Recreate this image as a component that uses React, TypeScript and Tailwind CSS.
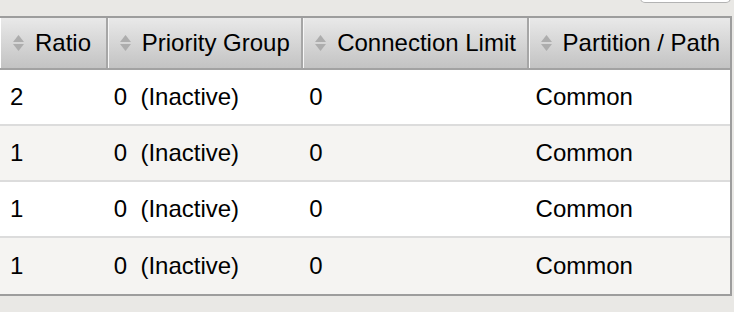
import React from "react";

const cols = [
  { label: "Ratio", w: "w-[106px]" },
  { label: "Priority Group", w: "w-[196px]" },
  { label: "Connection Limit", w: "w-[226px]" },
  { label: "Partition / Path", w: "w-[204px]" },
];

const rows = [
  { ratio: "2", group: "0  (Inactive)", limit: "0", path: "Common" },
  { ratio: "1", group: "0  (Inactive)", limit: "0", path: "Common" },
  { ratio: "1", group: "0  (Inactive)", limit: "0", path: "Common" },
  { ratio: "1", group: "0  (Inactive)", limit: "0", path: "Common" },
];

function SortIcon() {
  return (
    <svg width="11" height="16" viewBox="0 0 11 16" className="shrink-0">
      <path d="M5.5 0 L11 7 L0 7 Z" fill="#adadad" />
      <path d="M0 9 L11 9 L5.5 16 Z" fill="#adadad" />
    </svg>
  );
}

export default function App() {
  return (
    <div className="w-[734px] h-[312px] bg-[#e9e8e5] overflow-hidden font-['Liberation_Sans',Arial,sans-serif] text-black">
      {/* top strip with the edge of a button */}
      <div className="h-4 flex justify-end pr-[3px]">
        <div className="w-[91px] h-[5px] -mt-[2px] bg-white border border-[#b3b3b3] rounded-b-[5px]" />
      </div>

      <div className="w-[732px] border-t-2 border-r-2 border-b-2 border-[#9d9d9d]">
        {/* header */}
        <div className="flex h-[52px] bg-gradient-to-b from-[#e9e9e9] to-[#c3c3c3] border-b-2 border-[#a2a2a2]">
          {cols.map((c, i) => (
            <div
              key={c.label}
              className={`${c.w} flex items-center gap-[11px] pl-3 text-[24px] ${
                i === 0 ? "border-l border-white" : "border-l-2 border-l-[#a6a6a6] shadow-[inset_1px_0_0_#f7f7f7]"
              }`}
            >
              <SortIcon />
              <span>{c.label}</span>
            </div>
          ))}
        </div>

        {/* rows */}
        {rows.map((r, i) => (
          <div
            key={i}
            className={`flex h-14 items-center text-[24px] ${
              i % 2 === 0 ? "bg-white" : "bg-[#f5f4f2]"
            } ${i < rows.length - 1 ? "border-b-2 border-[#dcdcdc]" : ""}`}
          >
            <div className="w-[106px] pl-[10px]">{r.ratio}</div>
            <div className="w-[196px] pl-2 whitespace-pre">{r.group}</div>
            <div className="w-[226px] pl-2">{r.limit}</div>
            <div className="w-[204px] pl-[9px]">{r.path}</div>
          </div>
        ))}
      </div>
    </div>
  );
}
